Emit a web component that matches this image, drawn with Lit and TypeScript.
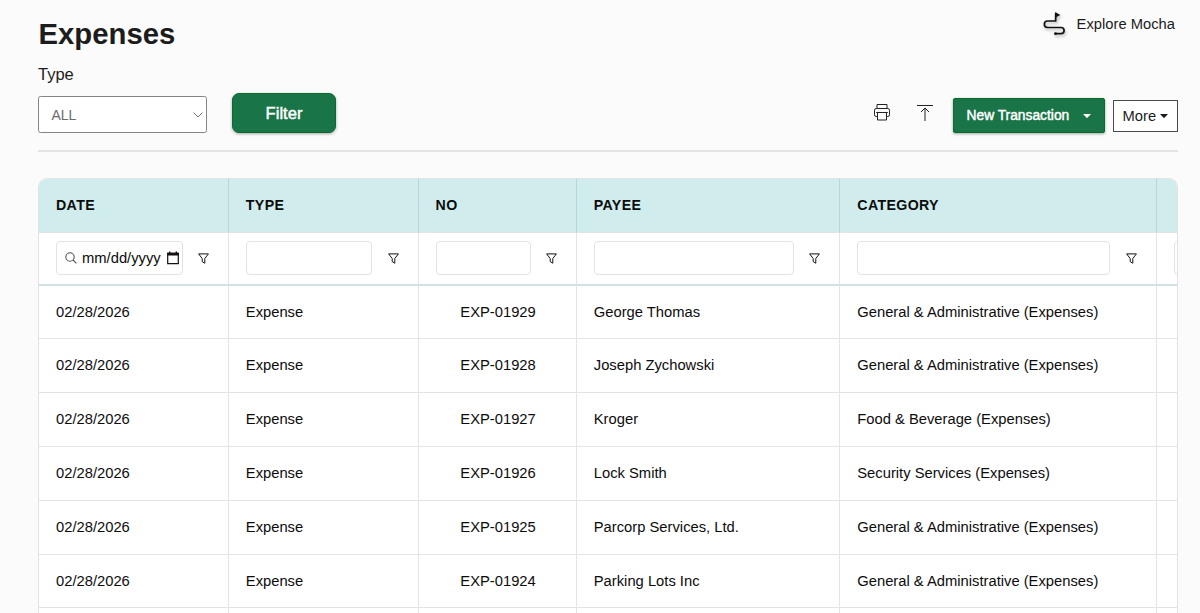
import { LitElement, html, svg, css, nothing } from "lit";
import { customElement } from "lit/decorators.js";
import { classMap } from "lit/directives/class-map.js";

interface Column {
  key: string;
  label: string;
  kind: "date" | "text";
}

const COLUMNS: Column[] = [
  { key: "date", label: "DATE", kind: "date" },
  { key: "type", label: "TYPE", kind: "text" },
  { key: "no", label: "NO", kind: "text" },
  { key: "payee", label: "PAYEE", kind: "text" },
  { key: "category", label: "CATEGORY", kind: "text" },
  { key: "extra", label: "", kind: "text" },
];

const GA = "General & Administrative (Expenses)";
const ENTRIES: [string, string, string][] = [
  ["EXP-01929", "George Thomas", GA],
  ["EXP-01928", "Joseph Zychowski", GA],
  ["EXP-01927", "Kroger", "Food & Beverage (Expenses)"],
  ["EXP-01926", "Lock Smith", "Security Services (Expenses)"],
  ["EXP-01925", "Parcorp Services, Ltd.", GA],
  ["EXP-01924", "Parking Lots Inc", GA],
  ["", "", ""],
];

const ROWS: Record<string, string>[] = ENTRIES.map(([no, payee, category]) => ({
  date: no ? "02/28/2026" : "",
  type: no ? "Expense" : "",
  no,
  payee,
  category,
  extra: "",
}));

const caret = svg`<path d="M0 0h8L4 4.2z" fill="currentColor"/>`;

@customElement("expense-table")
export class ExpenseTable extends LitElement {
  static styles = css`
    :host {
      display: block;
      height: 460px;
      box-sizing: border-box;
      border: 1px solid #e2e4e4;
      border-bottom: 0;
      border-radius: 9px 9px 0 0;
      background: #fff;
      overflow: hidden;
      font-size: 14.75px;
      color: #0c0c0c;
    }
    .row {
      display: grid;
      grid-template-columns: 189.8px 189.8px 158.2px 263.5px 316.4px 190px;
      width: 1307.7px;
      height: 53.82px;
    }
    .cell {
      display: flex;
      align-items: center;
      box-sizing: border-box;
      padding: 0 17px;
      border-right: 1px solid #e3e5e5;
      border-bottom: 1px solid #e3e5e5;
      white-space: nowrap;
    }
    .head {
      height: 54px;
    }
    .head .cell {
      background: #d0ecec;
      border-right-color: #b9d6d6;
      padding-bottom: 1px;
      font-size: 14.2px;
      font-weight: 700;
      letter-spacing: 0.35px;
    }
    .filters {
      height: 52.6px;
    }
    .filters .cell {
      border-bottom: 2px solid #cfe1e3;
    }
    .body .cell {
      padding-bottom: 1px;
    }
    .body .no {
      justify-content: flex-end;
      padding-right: 40px;
    }
    .field {
      display: flex;
      align-items: center;
      flex: 1;
      box-sizing: border-box;
      height: 34px;
      border: 1px solid #e2e3e3;
      border-radius: 4px;
      padding: 0 3px 0 8px;
    }
    .search {
      width: 12px;
      height: 12px;
      margin-right: 5px;
      flex: none;
    }
    .calendar {
      width: 12px;
      height: 14px;
      margin-left: auto;
      flex: none;
    }
    .funnel {
      width: 11px;
      height: 11px;
      flex: none;
      margin: 0 2px 0 15.2px;
    }
  `;

  private field(c: Column) {
    return html`
      <div class="field">
        ${c.kind === "date"
          ? html`<svg class="search" viewBox="0 0 12 12" fill="none" stroke="#555" stroke-width="1.1">
                <circle cx="5" cy="5" r="4.2" />
                <path d="M8 8l3.4 3.4" />
              </svg>
              <span>mm/dd/yyyy</span>
              <svg class="calendar" viewBox="0 0 12 14">
                <path d="M.7 2.3h10.6v10.4H.7z" fill="none" stroke="#111" stroke-width="1.2" />
                <path d="M.2 1.7h11.6V4.4H.2zM2 .4h1.4v2H2zM8.6.4H10v2H8.6z" fill="#111" />
              </svg>`
          : nothing}
      </div>
      <svg class="funnel" viewBox="0 0 11 11" fill="none" stroke="#111" stroke-width="1" stroke-linejoin="round">
        <path d="M.6.9h9.8L6.8 5.5v4.7L4.2 8.6V5.5z" />
      </svg>
    `;
  }

  render() {
    return html`
      <div class="row head">${COLUMNS.map((c) => html`<div class="cell">${c.label}</div>`)}</div>
      <div class="row filters">${COLUMNS.map((c) => html`<div class="cell">${this.field(c)}</div>`)}</div>
      ${ROWS.map(
        (r) => html`<div class="row body">
          ${COLUMNS.map((c) => html`<div class=${classMap({ cell: true, no: c.key === "no" })}>${r[c.key]}</div>`)}
        </div>`
      )}
    `;
  }
}

@customElement("app-root")
export class AppRoot extends LitElement {
  static styles = css`
    :host {
      display: block;
      box-sizing: border-box;
      height: 613px;
      padding: 0 22px 0 38px;
      overflow: hidden;
      background: #fbfbfb;
      color: #1c1c1c;
      font-family: "Liberation Sans", Arial, sans-serif;
    }
    .top {
      display: flex;
      justify-content: space-between;
      height: 62px;
      padding-right: 3px;
    }
    .title {
      margin: 17px 0 0 0.5px;
      font-size: 29.3px;
      line-height: 34px;
      font-weight: 700;
    }
    .explore {
      display: flex;
      align-items: center;
      gap: 8px;
      height: 48px;
      font-size: 14.75px;
    }
    .route {
      width: 26px;
      height: 28px;
      overflow: visible;
      filter: drop-shadow(1.5px 2px 1.5px rgba(0, 0, 0, 0.28));
    }
    .toolbar {
      display: flex;
      justify-content: space-between;
      height: 88px;
      border-bottom: 2px solid #e2e3e3;
      margin-bottom: 26px;
    }
    .toolbar,
    expense-table {
      width: 1140px;
    }
    .controls {
      display: flex;
      gap: 25px;
    }
    .label {
      display: block;
      font-size: 16.5px;
      line-height: 24px;
      margin-bottom: 10px;
    }
    .select {
      display: flex;
      align-items: center;
      justify-content: space-between;
      box-sizing: border-box;
      width: 169px;
      height: 37px;
      padding: 0 3px 0 12.5px;
      border: 1px solid #858585;
      border-radius: 2.5px;
      background: #fff;
      color: #6b6b6b;
      font-size: 14px;
    }
    .chevron {
      width: 10px;
      height: 6px;
    }
    .button {
      display: flex;
      align-items: center;
      justify-content: center;
      box-sizing: border-box;
      background: #197447;
      color: #fff;
      border: 1px solid #0b6a2c;
      -webkit-text-stroke: 0.45px #fff;
      box-shadow: 0 1px 3px rgba(0, 0, 0, 0.35);
    }
    .apply {
      width: 104px;
      height: 40px;
      margin-top: 31.4px;
      padding-top: 1px;
      border-radius: 7px;
      font-size: 16.6px;
    }
    .actions {
      display: flex;
      align-items: flex-start;
    }
    .print {
      width: 16px;
      height: 17px;
      margin: 42px 27px 0 0;
    }
    .upload {
      width: 16px;
      height: 17px;
      margin: 42px 20px 0 0;
    }
    .create {
      justify-content: space-between;
      width: 152px;
      height: 35px;
      margin-top: 36px;
      padding: 0 13px 0 12.5px;
      border-radius: 2px;
      font-size: 13.8px;
    }
    .caret {
      width: 8px;
      height: 4px;
    }
    .more {
      display: flex;
      align-items: center;
      justify-content: space-between;
      box-sizing: border-box;
      width: 65px;
      height: 32px;
      margin: 38px 0 0 8px;
      padding: 0 9px 0 8.5px;
      border: 1px solid #4a4a4a;
      background: #fff;
      font-size: 14.75px;
    }
  `;

  render() {
    return html`
      <header class="top">
        <h1 class="title">Expenses</h1>
        <div class="explore">
          <svg class="route" viewBox="0 0 26 28" fill="none" stroke="#111" stroke-width="1.7" stroke-linecap="round">
            <path d="M12.7 11V3.4M12.7 11H4.6a3.25 3.25 0 0 0 0 6.5H18a3.1 3.1 0 0 1 0 6.2H12.7" />
            <path d="M12.4 2.2l5 2.7-5 2.7z" fill="#111" stroke="none" />
            <circle cx="12.5" cy="23.7" r="1.4" fill="#111" stroke="none" />
          </svg>
          <span>Explore Mocha</span>
        </div>
      </header>
      <section class="toolbar">
        <div class="controls">
          <div>
            <span class="label">Type</span>
            <div class="select">
              <span>ALL</span>
              <svg class="chevron" viewBox="0 0 10 6" fill="none" stroke="#777" stroke-width="1">
                <path d="M.6.6L5 5 9.4.6" />
              </svg>
            </div>
          </div>
          <div class="button apply">Filter</div>
        </div>
        <div class="actions">
          <svg class="print" viewBox="0 0 16 17" fill="none" stroke="#222" stroke-width="1">
            <path d="M3 4.5v-4h10v4M3 12.5H2.2A1.7 1.7 0 0 1 .5 10.8V6.2a1.7 1.7 0 0 1 1.7-1.7h11.6a1.7 1.7 0 0 1 1.7 1.7v4.6a1.7 1.7 0 0 1-1.7 1.7H13M3.5 8.5h9v7.5h-9zM2.2 8.5h11.6" />
          </svg>
          <svg class="upload" viewBox="0 0 16 17" fill="none" stroke="#222" stroke-width="1">
            <path d="M0 1.5h16M8 17V4M4 8l4-4 4 4" />
          </svg>
          <div class="button create">
            <span>New Transaction</span>
            <svg class="caret" viewBox="0 0 8 4">${caret}</svg>
          </div>
          <div class="more">
            <span>More</span>
            <svg class="caret" viewBox="0 0 8 4">${caret}</svg>
          </div>
        </div>
      </section>
      <expense-table></expense-table>
    `;
  }
}
